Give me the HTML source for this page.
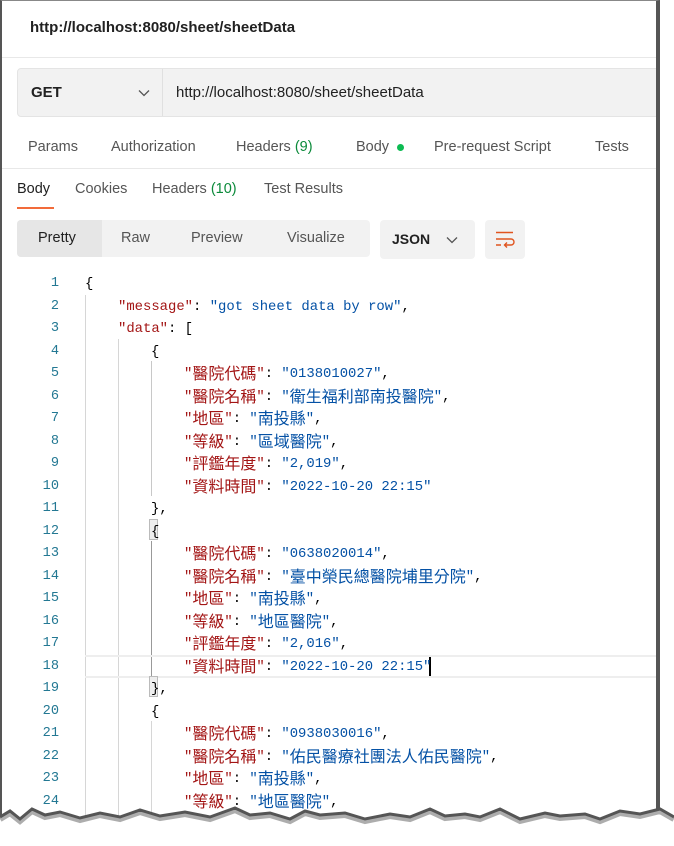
<!DOCTYPE html>
<html><head><meta charset="utf-8"><style>
*{margin:0;padding:0;box-sizing:border-box}
body{width:674px;height:846px;background:#fff;position:relative;overflow:hidden;font-family:"Liberation Sans","Noto Sans CJK TC",sans-serif}
.frame{position:absolute;left:0;top:0;width:660px;height:846px;border-left:2px solid #555;border-right:4px solid #555;border-top:1px solid #888;background:#fff;overflow:hidden}
.abs{position:absolute}
.t{color:#555;font-size:14.5px}
.code{font-family:"Liberation Mono","Noto Sans CJK TC",monospace;font-size:13.9px;white-space:pre;height:20px;line-height:20px}
.ln{position:absolute;width:57px;text-align:right;color:#237893;font-family:"Liberation Mono",monospace;font-size:13.6px}
.k{color:#a31515}.v{color:#0451a5}
.c{font-family:"Noto Sans CJK TC",sans-serif;font-size:16px;line-height:1;display:inline-block;vertical-align:-2px}
.g{position:absolute;width:1px;background:#d6d6d6}
</style></head><body>
<div class="frame">
<div class="abs" style="left:28px;top:18px;font-size:15px;font-weight:bold;color:#212121">http://localhost:8080/sheet/sheetData</div>
<div class="abs" style="left:0;top:56px;width:660px;height:1px;background:#e8e8e8"></div>
<div class="abs" style="left:15px;top:67px;width:650px;height:49px;background:#f2f2f2;border:1px solid #e4e4e4;border-radius:4px"></div>
<div class="abs" style="left:160px;top:68px;width:1px;height:47px;background:#e0e0e0"></div>
<div class="abs" style="left:29px;top:83px;font-size:15px;font-weight:bold;color:#212121">GET</div>
<svg class="abs" style="left:136px;top:88px" width="12" height="8"><path d="M1 1.5L6 6.5L11 1.5" fill="none" stroke="#555" stroke-width="1.3"/></svg>
<div class="abs" style="left:174px;top:83px;font-size:15px;color:#212121">http://localhost:8080/sheet/sheetData</div>
<div class="abs t" style="left:26px;top:138px">Params</div>
<div class="abs t" style="left:109px;top:138px">Authorization</div>
<div class="abs t" style="left:234px;top:138px">Headers <span style="color:#0b8a3a">(9)</span></div>
<div class="abs t" style="left:354px;top:138px">Body</div>
<div class="abs" style="left:395px;top:143px;width:7px;height:7px;border-radius:50%;background:#0cbb52"></div>
<div class="abs t" style="left:432px;top:138px">Pre-request Script</div>
<div class="abs t" style="left:593px;top:138px">Tests</div>
<div class="abs" style="left:0;top:167px;width:660px;height:1px;background:#e8e8e8"></div>
<div class="abs t" style="left:15px;top:180px;color:#212121">Body</div>
<div class="abs" style="left:15px;top:206px;width:37px;height:2px;background:#f26b3a"></div>
<div class="abs t" style="left:73px;top:180px">Cookies</div>
<div class="abs t" style="left:150px;top:180px">Headers <span style="color:#0b8a3a">(10)</span></div>
<div class="abs t" style="left:262px;top:180px">Test Results</div>
<div class="abs" style="left:15px;top:219px;width:353px;height:37px;background:#f2f2f2;border-radius:4px"></div>
<div class="abs" style="left:15px;top:219px;width:85px;height:37px;background:#e6e6e6;border-radius:4px 0 0 4px"></div>
<div class="abs t" style="left:36px;top:229px;color:#212121">Pretty</div>
<div class="abs t" style="left:119px;top:229px">Raw</div>
<div class="abs t" style="left:189px;top:229px">Preview</div>
<div class="abs t" style="left:285px;top:229px">Visualize</div>
<div class="abs" style="left:378px;top:219px;width:95px;height:39px;background:#f2f2f2;border-radius:4px"></div>
<div class="abs" style="left:390px;top:230px;font-size:14px;font-weight:bold;color:#212121">JSON</div>
<svg class="abs" style="left:444px;top:235px" width="12" height="8"><path d="M1 1.5L6 6.5L11 1.5" fill="none" stroke="#555" stroke-width="1.3"/></svg>
<div class="abs" style="left:483px;top:219px;width:40px;height:39px;background:#f2f2f2;border-radius:4px"></div>
<svg class="abs" style="left:492px;top:229px" width="22" height="18"><path d="M2 2.5H19M2 9H17a3 3 0 0 1 0 6H11M13 12.5L10.5 15L13 17.5M2 15H7" fill="none" stroke="#e0541f" stroke-width="1.4"/></svg>

<div class="g" style="left:83px;top:294px;height:520px"></div>
<div class="g" style="left:116px;top:338px;height:480px"></div>
<div class="g" style="left:149px;top:360px;height:135px;background:#c8c8c8"></div>
<div class="g" style="left:149px;top:540px;height:135px;background:#999"></div>
<div class="g" style="left:149px;top:720px;height:100px"></div>
<div class="abs" style="left:83px;top:654px;width:580px;height:23px;border-top:2px solid #eee;border-bottom:2px solid #eee"></div>
<div class="abs" style="left:147px;top:518px;width:9px;height:21px;background:#eee;border:1px solid #bbb"></div>
<div class="abs" style="left:147px;top:675px;width:9px;height:21px;background:#eee;border:1px solid #bbb"></div>
<div class="abs" style="left:427px;top:656px;width:2px;height:19px;background:#000"></div>

<div id="code"></div>
</div>
<svg class="abs" style="left:0;top:795px" width="674" height="51"><path d="M0 22 L10 16 L20 24 L32 14 L45 20 L60 17 L80 23 L100 18 L120 22 L140 15 L160 21 L185 17 L210 22 L235 13 L250 20 L270 18 L290 24 L305 16 L320 20 L345 18 L365 24 L390 19 L410 22 L430 14 L445 21 L465 19 L480 22 L500 14 L520 24 L545 18 L560 21 L585 19 L600 24 L620 16 L640 19 L660 14 L674 22 L674 51 L0 51Z" fill="#fff"/><path d="M0 24 L10 18 L20 26 L32 16 L45 22 L60 19 L80 25 L100 20 L120 24 L140 17 L160 23 L185 19 L210 24 L235 15 L250 22 L270 20 L290 26 L305 18 L320 22 L345 20 L365 26 L390 21 L410 24 L430 16 L445 23 L465 21 L480 24 L500 16 L520 26 L545 20 L560 23 L585 21 L600 26 L620 18 L640 21 L660 16 L674 24" fill="none" stroke="#777" stroke-width="6" opacity=".6"/><path d="M0 22 L10 16 L20 24 L32 14 L45 20 L60 17 L80 23 L100 18 L120 22 L140 15 L160 21 L185 17 L210 22 L235 13 L250 20 L270 18 L290 24 L305 16 L320 20 L345 18 L365 24 L390 19 L410 22 L430 14 L445 21 L465 19 L480 22 L500 14 L520 24 L545 18 L560 21 L585 19 L600 24 L620 16 L640 19 L660 14 L674 22" fill="none" stroke="#555" stroke-width="3"/></svg>
<script>
const L=[
[0,'{'],
[1,'<span class="k">"message"</span>: <span class="v">"got sheet data by row"</span>,'],
[1,'<span class="k">"data"</span>: ['],
[2,'{'],
[3,'K醫院代碼K: V0138010027V,'],
[3,'K醫院名稱K: V衛生福利部南投醫院V,'],
[3,'K地區K: V南投縣V,'],
[3,'K等級K: V區域醫院V,'],
[3,'K評鑑年度K: V2,019V,'],
[3,'K資料時間K: V2022-10-20 22:15V'],
[2,'},'],
[2,'{'],
[3,'K醫院代碼K: V0638020014V,'],
[3,'K醫院名稱K: V臺中榮民總醫院埔里分院V,'],
[3,'K地區K: V南投縣V,'],
[3,'K等級K: V地區醫院V,'],
[3,'K評鑑年度K: V2,016V,'],
[3,'K資料時間K: V2022-10-20 22:15V'],
[2,'},'],
[2,'{'],
[3,'K醫院代碼K: V0938030016V,'],
[3,'K醫院名稱K: V佑民醫療社團法人佑民醫院V,'],
[3,'K地區K: V南投縣V,'],
[3,'K等級K: V地區醫院V,']];
function cj(s){return s.replace(/([^\x00-\x7f]+)/g,'<span class="c">$1</span>')}
let h='';
L.forEach((l,i)=>{let y=273+i*22.5;let s=l[1];
if(s.startsWith('K')){s=s.replace(/^K(.*?)K(.*?)V(.*?)V(.*)$/,(m,a,b,c,d)=>'<span class="k">"'+cj(a)+'"</span>'+b+'<span class="v">"'+cj(c)+'"</span>'+d);}
h+='<div class="ln" style="top:'+y+'px;line-height:20px">'+(i+1)+'</div><div class="abs code" style="left:'+(83+l[0]*33)+'px;top:'+y+'px">'+s+'</div>';});
document.getElementById('code').innerHTML=h;
</script>
</body></html>
